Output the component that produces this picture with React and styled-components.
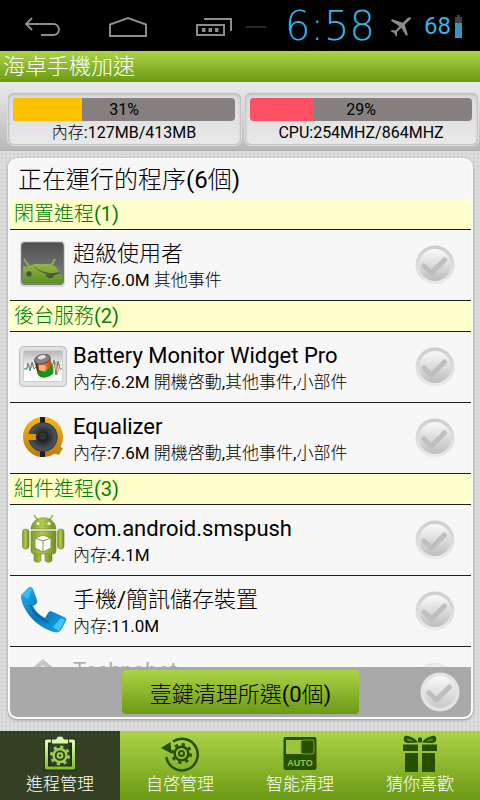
import React, { useState } from "react";
import styled, { createGlobalStyle } from "styled-components";

const GlobalStyle = createGlobalStyle`
  * { box-sizing: border-box; }
  body {
    margin: 0;
    color: #000;
    font-family: Roboto, "Noto Sans CJK TC Light", "Noto Sans CJK TC", sans-serif;
  }
  button, input { font: inherit; }
`;

const GREEN = "linear-gradient(#acd348, #6b9a13)";

const Screen = styled.div`
  display: flex;
  flex-direction: column;
  height: 100vh;
  background-color: #dcdcdc;
  background-image: radial-gradient(#d2d2d2 1px, transparent 1px);
  background-size: 4px 4px;
`;

const StatusBar = styled.header`
  display: flex;
  align-items: center;
  flex: none;
  height: 51px;
  padding: 2px 18px 0 18px;
  background: #000;
  color: #33b5e5;
`;

const SystemKeys = styled.div`
  display: flex;
  flex: 1;
  gap: 38px;
`;

const SystemKey = styled.button`
  display: grid;
  place-items: center;
  width: 48px;
  height: 49px;
  padding: 0;
  border: 0;
  background: none;
`;

const Clock = styled.time`
  width: 112px;
  font: 200 40px/49px "DejaVu Sans Light", "DejaVu Sans", sans-serif;
  text-align: center;
`;

const StatusIcons = styled.div`
  display: flex;
  align-items: center;
  gap: 4px;
  margin-left: 8px;
`;

const BatteryLevel = styled.span`
  margin-left: 8px;
  font-size: 24px;
  line-height: 49px;
`;

const TitleBar = styled.h1`
  flex: none;
  margin: 0;
  padding: 0 3px;
  background: ${GREEN};
  color: #fff;
  font-size: 22px;
  font-weight: 400;
  line-height: 31px;
`;

const Meters = styled.section`
  display: grid;
  grid-template-columns: 1fr 1fr;
  gap: 4px;
  flex: none;
  padding: 11px 2px 5px 8px;
  border-bottom: 1px solid #b0b0b0;
  background: linear-gradient(#ebebeb, #b8b8b8);
`;

const MeterCard = styled.div`
  padding: 5px 6px 1px 5px;
  border-radius: 6px;
  background: linear-gradient(#dadada, #e9e9e9);
  box-shadow: inset 0 0 0 1px #c4c4c4, inset 0 1px 3px #aaa, 0 0 0 1px #dedede;
  font-size: 16px;
  line-height: 23px;
  text-align: center;
`;

const Track = styled.div`
  display: grid;
  overflow: hidden;
  height: 23px;
  border-radius: 4px;
  background: #868180;
  line-height: 24px;
  > * { grid-area: 1 / 1; }
`;

const Fill = styled.div`
  background: ${(p) => p.$color};
`;

const Panel = styled.main`
  display: flex;
  flex-direction: column;
  flex: 1;
  min-height: 0;
  margin: 7px 7px 12px 8px;
  overflow: hidden;
  border: 2px solid #fafafa;
  border-radius: 9px;
  background: #f7f7f7;
  box-shadow: 0 1px 3px #8a8f92;
`;

const PanelTitle = styled.h2`
  flex: none;
  margin: 0;
  padding: 2px 8px 0;
  font-size: 24px;
  font-weight: 400;
  line-height: 37px;
`;

const ListArea = styled.div`
  flex: 1;
  min-height: 0;
  overflow-y: auto;
  scrollbar-width: none;
`;

const GroupTitle = styled.h3`
  margin: 0;
  padding: 1px 4px 0;
  border-bottom: 1px solid #1e1e1e;
  background: #ffffcc;
  color: #008000;
  font-size: 20px;
  font-weight: 400;
  line-height: 29px;
`;

const Rows = styled.ul`
  margin: 0;
  padding: 0;
  list-style: none;
`;

const Row = styled.li`
  display: flex;
  align-items: center;
  gap: 6px;
  height: 71px;
  padding: 0 16px 0 9px;
  border-bottom: 1px solid #1e1e1e;
  opacity: ${(p) => (p.$faded ? 0.3 : 1)};
`;

const RowText = styled.div`
  flex: 1;
  min-width: 0;
  padding-top: 2px;
`;

const AppName = styled.div`
  font-size: 22px;
  line-height: 28px;
`;

const AppInfo = styled.div`
  font-size: 17px;
  line-height: 24px;
`;

const CheckBox = styled.span`
  display: grid;
  flex: none;
  width: 40px;
  height: 40px;
  > * { grid-area: 1 / 1; }
  input { width: 40px; height: 40px; margin: 0; opacity: 0; }
`;

const ActionBar = styled.div`
  display: grid;
  grid-template-columns: 1fr auto 1fr;
  align-items: center;
  flex: none;
  height: 50px;
  padding: 0 11px;
  border-radius: 0 0 7px 7px;
  background: #a9a9a9;
  > :first-child { grid-column: 2; }
  > :last-child { justify-self: end; }
`;

const CleanButton = styled.button`
  height: 44px;
  padding: 0 28px;
  border: 0;
  border-radius: 4px;
  background: ${GREEN};
  color: #000;
  font-size: 22px;
`;

const Tabs = styled.nav`
  display: grid;
  grid-template-columns: repeat(4, 1fr);
  flex: none;
  height: 69px;
  background: ${GREEN};
`;

const Tab = styled.button`
  display: flex;
  flex-direction: column;
  align-items: center;
  padding: 4px 0 0;
  border: 0;
  background: ${(p) => (p.$active ? "#344024" : "transparent")};
  color: #fff;
  font-size: 17px;
  line-height: 22px;
`;

function BackIcon() {
  return (
    <svg width="36" height="20" viewBox="0 0 36 20" fill="none" stroke="#8c8c8c" strokeWidth="2">
      <path d="M8 1 2 7l6 6M2 7h27.500a5.500 5.500 0 0 1 0 11H17" />
    </svg>
  );
}

function HomeIcon() {
  return (
    <svg width="40" height="22" viewBox="0 0 40 22" fill="none" stroke="#8c8c8c" strokeWidth="2">
      <path d="M2 20V8.500L20 2l18 6.500V20z" />
    </svg>
  );
}

function RecentIcon() {
  return (
    <svg width="38" height="20" viewBox="0 0 38 20" fill="none" stroke="#8c8c8c" strokeWidth="2">
      <path d="M9 2h27v12M2 8h27v10H2z" />
      <path d="M7 13h3.500M13.500 13H17M20 13h3.500" strokeWidth="4" />
    </svg>
  );
}

function MenuDash() {
  return (
    <svg width="20" height="4" viewBox="0 0 20 4">
      <rect y="1" width="20" height="2" fill="#242424" />
    </svg>
  );
}

function PlaneIcon() {
  return (
    <svg width="22" height="20" viewBox="0 0 22 20" fill="#8d8c88">
      <path d="M20.800.7c-1-1-3 .1-4 1l-4 4L2.300 2.300.900 3.700l8.500 5.500-4 4.200-3.600-.4-1.200 1.200 3.700 1.800 1.700 3.400 1.200-1-.2-3.500 4.200-4.100 5.100 8.200 1.500-1.400L14.700 7.500l4.600-4c1-.9 1.900-2.300 1.500-2.800z" />
    </svg>
  );
}

function BatteryIcon() {
  return (
    <svg width="7" height="23" viewBox="0 0 7 23">
      <path d="M2 0h3v2h2v7H0V2h2z" fill="#424242" />
      <path d="M0 8h7v15H0z" fill="#3498bd" />
    </svg>
  );
}

function Gear({ x, y, r, color }) {
  return (
    <g transform={`translate(${x} ${y})`} stroke={color} fill="none">
      <circle r={r * 0.72} strokeWidth={r * 0.26} />
      <circle r={r * 0.96} strokeWidth={r * 0.3} strokeDasharray={`${r * 0.34} ${r * 0.414}`} />
      <circle r={r * 0.26} strokeWidth={r * 0.22} />
    </g>
  );
}

function TasksIcon() {
  return (
    <svg width="36" height="38" viewBox="0 0 36 38">
      <defs>
        <linearGradient id="clip" x2="0" y2="1">
          <stop stopColor="#e5fbc0" />
          <stop offset="1" stopColor="#83c12a" />
        </linearGradient>
      </defs>
      <path d="M5 6h26v27H5z" fill="none" stroke="#1f2b10" strokeWidth="5" />
      <path d="M4.500 6h27v27h-27z" fill="none" stroke="url(#clip)" strokeWidth="3" strokeLinejoin="round" />
      <path d="M9.500 9V4h4.500c1-4 7-4 8 0h4.500v5z" fill="#d9f8ab" stroke="#344024" />
      <Gear x={18} y={20.500} r={9} color="#a0d453" />
    </svg>
  );
}

function RestartIcon() {
  return (
    <svg width="40" height="38" viewBox="0 0 40 38">
      <path d="M13 6.500A15.800 15.800 0 1 1 6.300 22" fill="none" stroke="#265000" strokeWidth="2.500" />
      <path d="M1 13 10.500 7l1 11.500z" fill="#265000" />
      <Gear x={21.500} y={18.500} r={9.500} color="#265000" />
    </svg>
  );
}

function AutoIcon() {
  return (
    <svg width="34" height="38" viewBox="0 0 34 38">
      <rect x=".5" y="2" width="33" height="33" rx="2" fill="#265000" />
      <path d="M3 5h28v14H3z" fill="#9cc63a" />
      <rect x="18" y="5" width="13" height="14" rx="2" fill="#265000" stroke="#78a424" />
      <text x="17" y="31" textAnchor="middle" fill="#9cc63a" fontFamily="Liberation Sans, sans-serif" fontSize="9" fontWeight="700">AUTO</text>
    </svg>
  );
}

function GiftIcon() {
  return (
    <svg width="36" height="38" viewBox="0 0 36 38" fill="#265000">
      <path d="M1 9.500h15v6.500H1zM20 9.500h15v6.500H20zM3 18h13v19H3zM20 18h13v19H20z" />
      <path d="M16 7.500C10 8 4 9 2 6c-1-4 1-6 4-5 4 1 8 3 10 6.500zM20 7.500c6 .5 12 1.500 14-1.500 1-4-1-6-4-5-4 1-8 3-10 6.500z" />
      <path d="M5 3.500c3 0 5 1 7 3-3 0-5 0-7-1zM31 3.500c-3 0-5 1-7 3 3 0 5 0 7-1z" fill="#5d8624" />
      <rect x="16" y="2.500" width="4" height="5" rx="1" />
    </svg>
  );
}

function SuperuserIcon() {
  return (
    <svg width="48" height="52" viewBox="0 0 48 52">
      <defs>
        <linearGradient id="su-bg" x2="0" y2="1">
          <stop stopColor="#505050" />
          <stop offset="1" stopColor="#858585" />
        </linearGradient>
        <linearGradient id="su-bot" x2="0" y2="1">
          <stop stopColor="#93b64a" />
          <stop offset="1" stopColor="#5b9020" />
        </linearGradient>
      </defs>
      <rect x="1" y="2" width="45" height="46" rx="4" fill="#d8d8d8" />
      <rect x="2.500" y="3.500" width="42" height="42" rx="3" fill="url(#su-bg)" stroke="#777" />
      <path d="m5 20 5 7M36 20l-4 7" stroke="#8eb048" strokeWidth="2" />
      <path d="M4 27c4 2 7-1 12-2h14c6 1 9 4 10 9 3 1 4 5 4 10H4z" fill="url(#su-bot)" />
      <path d="M14 26c7 7 16 10 27 7l-1 2c-6 2-9 1-13 0-6-2-10-5-13-9z" fill="#505548" />
      <circle cx="10" cy="35" r="2.700" fill="#4a5540" />
      <path d="M27 35c2 1 5 1 8 1-1 5-8 4-8-1z" fill="#4a5540" />
    </svg>
  );
}

function BatteryWidgetIcon() {
  return (
    <svg width="48" height="52" viewBox="0 0 48 52">
      <defs>
        <linearGradient id="bw-screen" x2="0" y2="1">
          <stop stopColor="#b5b5b5" />
          <stop offset=".6" stopColor="#fff" />
        </linearGradient>
        <linearGradient id="bw-cell">
          <stop stopColor="#4e1a0b" />
          <stop offset=".5" stopColor="#e8702c" />
          <stop offset="1" stopColor="#c34a16" />
        </linearGradient>
      </defs>
      <rect x=".5" y="5.500" width="47" height="40" rx="4" fill="#e2e2e2" stroke="#bcbcbc" />
      <rect x="4.500" y="9.500" width="39" height="31" rx="2" fill="url(#bw-screen)" stroke="#cfcfcf" />
      <path d="M5 28h3l1-6 2 8 2-9 2 7 3-3M33 26l2-7 2 15 2-14 2 8h2" fill="none" stroke="#4c8a58" />
      <path d="M6 28l4-4 2 3 3-4M34 28l3-7 1 13 3-11" fill="none" stroke="#d56d55" strokeWidth=".7" />
      <g transform="rotate(-14 25 25)">
        <path d="M17 18v13c0 5 16 5 16 0V18z" fill="url(#bw-cell)" />
        <path d="M17 28c5 4 12 2 16-3v7c0 6-16 7-16-1z" fill="#159517" />
        <path d="m20 22 7 3-2 6-6-3z" fill="#f7b170" />
        <ellipse cx="25" cy="18" rx="8" ry="4.500" fill="#858585" stroke="#555" />
        <ellipse cx="25" cy="16" rx="4.500" ry="2.500" fill="#e6e6e6" stroke="#777" />
      </g>
    </svg>
  );
}

function EqualizerIcon() {
  return (
    <svg width="48" height="52" viewBox="0 0 48 52">
      <defs>
        <linearGradient id="eq-ring" x2="0" y2="1">
          <stop stopColor="#f2b414" />
          <stop offset="1" stopColor="#bf7e0c" />
        </linearGradient>
        <radialGradient id="eq-cone">
          <stop offset=".2" stopColor="#1d1f21" />
          <stop offset="1" stopColor="#626b75" />
        </radialGradient>
      </defs>
      <path d="m34 36 6-5c0 3 1 4 4 5l-4 7-6-2z" fill="#c5860f" />
      <circle cx="24" cy="25" r="17" fill="url(#eq-cone)" stroke="url(#eq-ring)" strokeWidth="6" />
      <path d="M21 5h5v6h-5zM21 39h5v6h-5z" fill="#1c1e20" />
      <circle cx="24" cy="25" r="14" fill="none" stroke="#3c444c" strokeWidth="1.500" />
      <path d="M8 22h10v6H8z" fill="#d89712" />
      <circle cx="24" cy="25" r="6.500" fill="#202224" stroke="#30353a" strokeWidth="1.500" />
      <circle cx="24" cy="24" r="3.500" fill="#343434" />
    </svg>
  );
}

function AndroidIcon() {
  return (
    <svg width="48" height="52" viewBox="0 0 48 52">
      <defs>
        <linearGradient id="droid">
          <stop stopColor="#7f9d2c" />
          <stop offset=".45" stopColor="#b2ca4c" />
          <stop offset="1" stopColor="#6d8c21" />
        </linearGradient>
      </defs>
      <path d="m15 1 5 7M34 1l-5 7" stroke="#9cb846" strokeWidth="1.500" />
      <g fill="url(#droid)" stroke="#71882c" strokeWidth=".6">
        <path d="M12 15C13 0 36 0 37 15z" />
        <rect x="3.500" y="15" width="6.500" height="20" rx="3" />
        <rect x="38.500" y="15" width="6.500" height="20" rx="3" />
        <path d="M15 37h7v9c0 3-7 3-7 0zM26 37h7v9c0 3-7 3-7 0z" />
        <path d="M12 17h25v19c0 3-1 4-4 4H16c-3 0-4-1-4-4z" />
      </g>
      <circle cx="19" cy="9.500" r="1.600" fill="#fff" />
      <circle cx="30" cy="9.500" r="1.600" fill="#fff" />
      <path d="m24 21 8 3v10l-8 4-8-4V24z" fill="#fff" stroke="#81983b" />
      <path d="m16 24 8 3 8-3M24 27v11" fill="none" stroke="#81983b" />
    </svg>
  );
}

function PhoneIcon() {
  return (
    <svg width="48" height="52" viewBox="0 0 48 52">
      <defs>
        <linearGradient id="phone" x1="0" y1="0" x2="1" y2="1">
          <stop stopColor="#2ab2ee" />
          <stop offset=".5" stopColor="#0677b8" />
          <stop offset="1" stopColor="#1ba9ed" />
        </linearGradient>
      </defs>
      <path d="M3 9 9 3c2-2 4-1 5 1l4 11c1 2 0 3-2 5l-2 1c2 5 6 9 12 12l3-5c1-2 3-2 5-1l11 5c2 1 3 2 2 4l-5 9c-1 2-4 3-7 2C20 43 5 29 2 13c0-2 0-3 1-4z" fill="url(#phone)" />
      <path d="m3 10 7-7 3 1-4 10z" fill="#37bdf4" />
      <path d="m40 46 6-11-4-2-8 9z" fill="#42c6f7" />
      <path d="M11 20c4 9 11 14 19 18" fill="none" stroke="#0969a6" strokeWidth="2" />
    </svg>
  );
}

function UpArrowIcon() {
  return (
    <svg width="48" height="52" viewBox="0 0 48 52">
      <path d="M24 3 44 20H34v24H14V20H4z" fill="#555" />
      <path d="m24 9 8 9H16z" fill="#ddd" />
    </svg>
  );
}

function Check({ label, light, checked, onChange }) {
  return (
    <CheckBox>
      <svg width="40" height="40" viewBox="0 0 40 40">
        <defs>
          <linearGradient id="ring" x2="0" y2="1">
            <stop stopColor="#cdcdcd" />
            <stop offset="1" stopColor="#ebebeb" />
          </linearGradient>
          <linearGradient id="disc" x2="0" y2="1">
            <stop stopColor="#fafafa" />
            <stop offset="1" stopColor="#bdbdbd" />
          </linearGradient>
          <linearGradient id="disc-light" x2="0" y2="1">
            <stop stopColor="#f8f8f8" />
            <stop offset="1" stopColor="#cacaca" />
          </linearGradient>
        </defs>
        <circle cx="20" cy="20" r="19.500" fill={light ? "#e4e4e4" : "url(#ring)"} />
        <circle cx="20" cy="20" r="16" fill={light ? "url(#disc-light)" : "url(#disc)"} />
        <path d="m9 21 7.500 7L29.500 15" fill="none" stroke={checked ? "#7cab20" : "#bfbfbf"} strokeWidth="5" strokeLinecap="round" />
      </svg>
      <input type="checkbox" aria-label={label} checked={checked} onChange={onChange} />
    </CheckBox>
  );
}

const meters = [
  { name: "內存", value: 31, color: "#ffc000", text: "內存:127MB/413MB" },
  { name: "CPU", value: 29, color: "#ff5064", text: "CPU:254MHZ/864MHZ" },
];

const groups = [
  { title: "閑置進程(1)", apps: [{ name: "超級使用者", info: "內存:6.0M 其他事件", Icon: SuperuserIcon }] },
  {
    title: "後台服務(2)",
    apps: [
      { name: "Battery Monitor Widget Pro", info: "內存:6.2M 開機啓動,其他事件,小部件", Icon: BatteryWidgetIcon },
      { name: "Equalizer", info: "內存:7.6M 開機啓動,其他事件,小部件", Icon: EqualizerIcon },
    ],
  },
  {
    title: "組件進程(3)",
    apps: [
      { name: "com.android.smspush", info: "內存:4.1M", Icon: AndroidIcon },
      { name: "手機/簡訊儲存裝置", info: "內存:11.0M", Icon: PhoneIcon },
      { name: "Technobot", info: "內存:4.0M", Icon: UpArrowIcon, faded: true },
    ],
  },
];

const tabs = [
  { label: "進程管理", Icon: TasksIcon },
  { label: "自啓管理", Icon: RestartIcon },
  { label: "智能清理", Icon: AutoIcon },
  { label: "猜你喜歡", Icon: GiftIcon },
];

export default function App() {
  const [selected, setSelected] = useState([]);
  const [tab, setTab] = useState(0);
  const names = groups.flatMap((g) => g.apps.map((a) => a.name));
  const all = selected.length === names.length;
  const toggle = (name) =>
    setSelected((s) => (s.includes(name) ? s.filter((n) => n !== name) : [...s, name]));

  return (
    <Screen>
      <GlobalStyle />
      <StatusBar>
        <SystemKeys>
          <SystemKey aria-label="返回"><BackIcon /></SystemKey>
          <SystemKey aria-label="主頁"><HomeIcon /></SystemKey>
          <SystemKey aria-label="最近"><RecentIcon /></SystemKey>
        </SystemKeys>
        <MenuDash />
        <StatusIcons>
          <Clock>6:58</Clock>
          <PlaneIcon />
          <BatteryLevel>68</BatteryLevel>
          <BatteryIcon />
        </StatusIcons>
      </StatusBar>
      <TitleBar>海卓手機加速</TitleBar>
      <Meters>
        {meters.map((m) => (
          <MeterCard key={m.name}>
            <Track role="progressbar" aria-label={m.name} aria-valuenow={m.value} aria-valuemin={0} aria-valuemax={100}>
              <Fill $color={m.color} style={{ width: `${m.value}%` }} />
              <span>{m.value}%</span>
            </Track>
            {m.text}
          </MeterCard>
        ))}
      </Meters>
      <Panel>
        <PanelTitle>正在運行的程序(6個)</PanelTitle>
        <ListArea>
          {groups.map((g) => (
            <section key={g.title}>
              <GroupTitle>{g.title}</GroupTitle>
              <Rows>
                {g.apps.map(({ name, info, Icon, faded }) => (
                  <Row key={name} $faded={faded}>
                    <Icon />
                    <RowText>
                      <AppName>{name}</AppName>
                      <AppInfo>{info}</AppInfo>
                    </RowText>
                    <Check label={name} checked={selected.includes(name)} onChange={() => toggle(name)} />
                  </Row>
                ))}
              </Rows>
            </section>
          ))}
        </ListArea>
        <ActionBar>
          <CleanButton onClick={() => setSelected([])}>壹鍵清理所選({selected.length}個)</CleanButton>
          <Check label="全選" light checked={all} onChange={() => setSelected(all ? [] : names)} />
        </ActionBar>
      </Panel>
      <Tabs>
        {tabs.map(({ label, Icon }, i) => (
          <Tab key={label} $active={i === tab} onClick={() => setTab(i)}>
            <Icon />
            {label}
          </Tab>
        ))}
      </Tabs>
    </Screen>
  );
}
